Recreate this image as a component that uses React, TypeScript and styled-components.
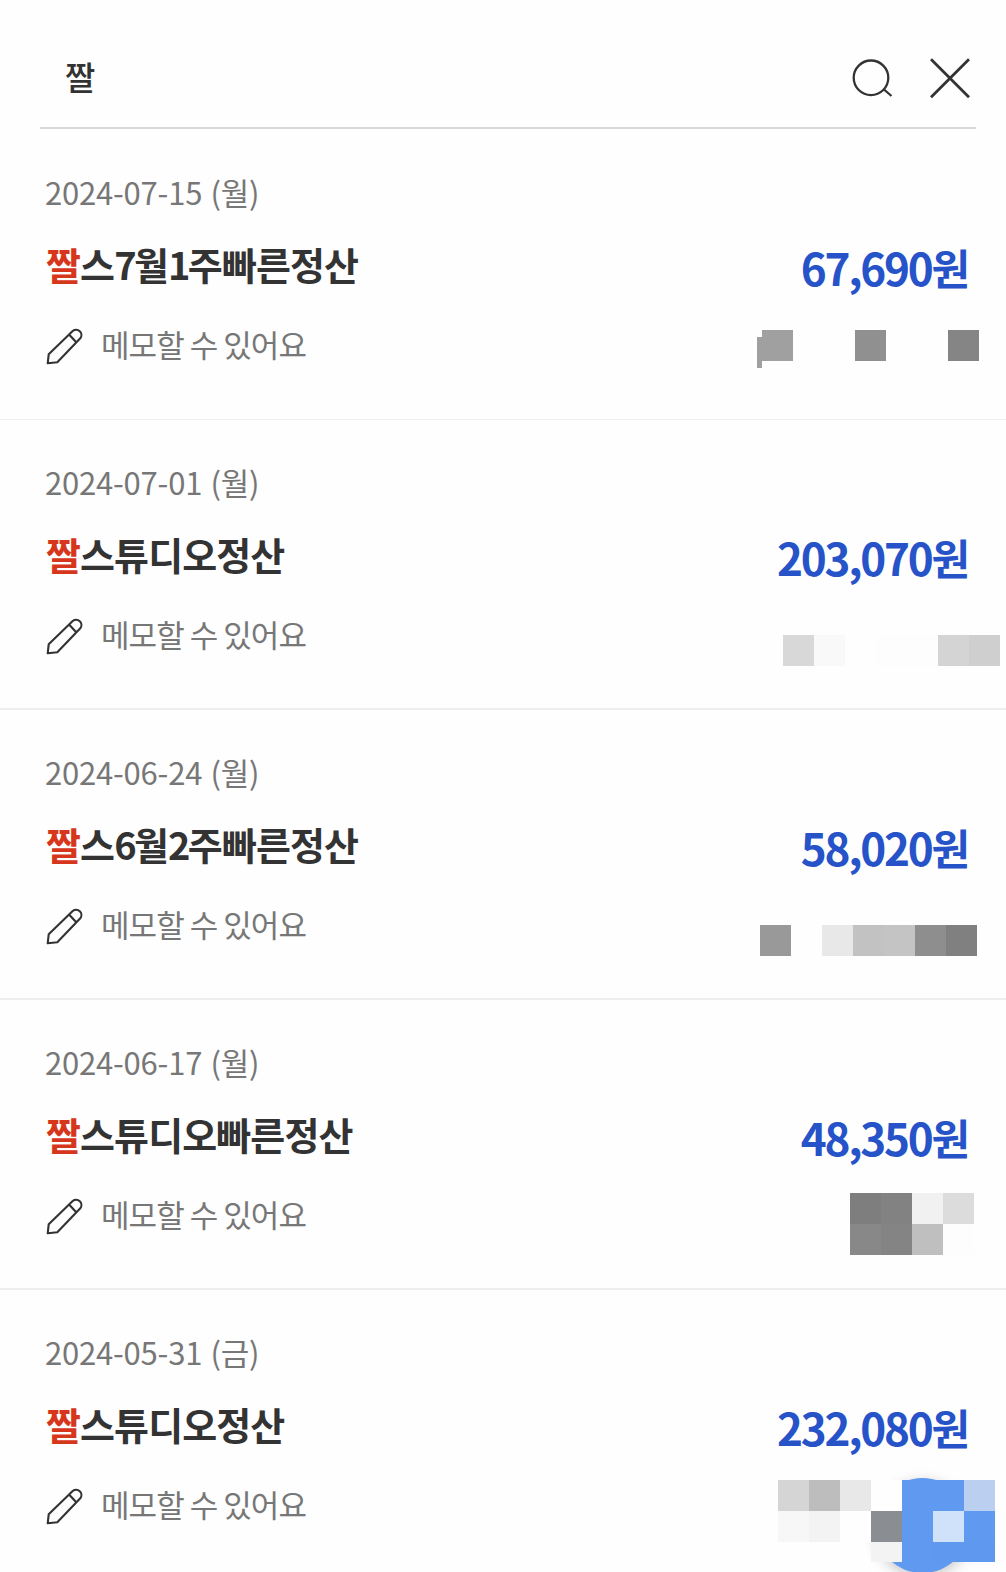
import React from "react";
import styled, { createGlobalStyle } from "styled-components";

const GlobalStyle = createGlobalStyle`
  * { box-sizing: border-box; }
  html, body { margin: 0; padding: 0; background: #fefefe; overflow: hidden; }
`;

const Page = styled.main`
  position: relative;
  width: 1006px;
  height: 1572px;
  overflow: hidden;
  background: #fefefe;
  color: #333;
  font-family: "Noto Sans CJK KR", "Noto Sans", sans-serif;
`;

const SearchBar = styled.header`
  display: flex;
  align-items: center;
  height: 99px;
  margin: 30px 30px 1px 40px;
  padding: 0 5px 1px 25px;
  border-bottom: 2px solid #d8d8d8;
`;

const Query = styled.div`
  flex: 1;
  padding-bottom: 5px;
  font-size: 33px;
  line-height: 48px;
  font-weight: 500;
`;

const IconButton = styled.button`
  display: flex;
  width: 42px;
  height: 42px;
  margin-left: 36px;
  padding: 0;
  border: 0;
  background: none;
`;

const List = styled.ul`
  margin: 0;
  padding: 0;
  list-style: none;
`;

const Row = styled.li<{ $line: number }>`
  display: flex;
  justify-content: space-between;
  height: 290px;
  padding-left: 45px;
  border-bottom: ${(p) => p.$line}px solid #eee;
`;

const Info = styled.div`
  display: flex;
  flex-direction: column;
  padding-top: 38px;
`;

const DateText = styled.div`
  height: 48px;
  font-size: 31px;
  line-height: 48px;
  letter-spacing: -0.2px;
  word-spacing: 1.5px;
  color: #777;
  white-space: nowrap;
`;

const Title = styled.div`
  height: 56px;
  margin: 20px 0 0 1px;
  font-size: 38px;
  line-height: 56px;
  font-weight: 700;
  letter-spacing: -0.9px;
  white-space: nowrap;
`;

const Match = styled.span`
  color: #d6371c;
`;

const Digit = styled.span`
  letter-spacing: -2.6px;
`;

const Memo = styled.div`
  display: flex;
  align-items: center;
  height: 46px;
  margin-top: 32px;
  color: #777;
  white-space: nowrap;
`;

const MemoText = styled.span`
  margin: -6px 0 0 16px;
  font-size: 31px;
  line-height: 46px;
  letter-spacing: -0.95px;
`;

const Side = styled.div`
  display: flex;
  flex-direction: column;
  align-items: flex-end;
  padding-top: 105px;
`;

const Amount = styled.div`
  height: 64px;
  margin: 0 38px 1px 0;
  font-size: 44px;
  line-height: 64px;
  font-weight: 700;
  letter-spacing: -2.2px;
  color: #2753c9;
  white-space: nowrap;
`;

const Currency = styled.span`
  font-size: 42px;
  line-height: 1;
  vertical-align: 1px;
`;

const Mosaic = styled.div<{ $cols: number; $top: number; $right: number; $rows?: string }>`
  position: relative;
  z-index: 2;
  display: grid;
  grid-template-columns: repeat(${(p) => p.$cols}, 31px);
  grid-template-rows: ${(p) => p.$rows ?? "none"};
  grid-auto-rows: 31px;
  margin: ${(p) => p.$top}px ${(p) => p.$right}px 0 0;
`;

const Cell = styled.i<{ $color: string }>`
  background: ${(p) => p.$color};
`;

const Sliver = styled.i`
  position: absolute;
  left: -5px;
  top: 7px;
  width: 5px;
  height: 31px;
  background: #a0a0a0;
`;

const FloatingButton = styled.button`
  position: absolute;
  z-index: 1;
  left: 875px;
  top: 1478px;
  width: 95px;
  height: 95px;
  padding: 0;
  border: 0;
  border-radius: 50%;
  background: #6099f0;
  box-shadow: 0 4px 14px rgba(0, 0, 0, 0.22);
`;

const SearchIcon = () => (
  <svg width="42" height="42" viewBox="0 0 42 42" fill="none" stroke="#333" strokeWidth="2.3">
    <circle cx="20" cy="20.8" r="17.3" />
    <path d="M33 32.5 L40.5 39" />
  </svg>
);

const CloseIcon = () => (
  <svg width="42" height="42" viewBox="0 0 42 42" fill="none" stroke="#333" strokeWidth="2.8">
    <path d="M2 2.3 L40 40.3 M40 2.3 L2 40.3" />
  </svg>
);

const PencilIcon = () => (
  <svg width="40" height="40" viewBox="0 0 40 40" fill="none" stroke="#333" strokeWidth="2.1" strokeLinejoin="round">
    <path d="M2.7 36.3 L3.7 27.3 L27.7 4 A5.3 5.3 0 0 1 35.3 11.3 L12.3 35.3 Z M24.3 7.7 L31.7 15.7" />
  </svg>
);

type Entry = {
  date: string;
  title: string;
  amount: string;
  cols: number;
  top: number;
  right: number;
  rows?: string;
  sliver?: boolean;
  cells: string[];
};

const N = "transparent";

const entries: Entry[] = [
  { date: "2024-07-15 (월)", title: "스7월1주빠른정산", amount: "67,690", cols: 7, top: 30, right: 27, sliver: true,
    cells: ["#a0a0a0", N, N, "#909090", N, N, "#858585"] },
  { date: "2024-07-01 (월)", title: "스튜디오정산", amount: "203,070", cols: 7, top: 45, right: 6,
    cells: ["#d8d8d8", "#f9f9f9", N, "#fdfdfd", "#fdfdfd", "#d4d4d4", "#cfcfcf"] },
  { date: "2024-06-24 (월)", title: "스6월2주빠른정산", amount: "58,020", cols: 7, top: 45, right: 29,
    cells: ["#999", N, "#e8e8e8", "#c2c2c2", "#c4c4c4", "#8e8e8e", "#808080"] },
  { date: "2024-06-17 (월)", title: "스튜디오빠른정산", amount: "48,350", cols: 4, top: 23, right: 32,
    cells: ["#7e7e7e", "#828282", "#f1f1f1", "#dcdcdc", "#888", "#848484", "#bfbfbf", "#fdfdfd"] },
  { date: "2024-05-31 (금)", title: "스튜디오정산", amount: "232,080", cols: 7, top: 20, right: 11, rows: "31px 31px 20px",
    cells: ["#d5d5d5", "#bdbdbd", "#e8e8e8", "#fefefe", "#6099f0", "#6099f0", "#bbcff1",
      "#f7f7f7", "#f3f3f3", "#fefefe", "#8a8e92", "#6099f0", "#cfe2fa", "#6099f0",
      N, N, N, "#f3f3f3", "#6099f0", "#5e98ef", "#5e98ef"] },
];

const renderTitle = (title: string) =>
  title.split(/(\d)/).map((part, i) => (/^\d$/.test(part) ? <Digit key={i}>{part}</Digit> : part));

export default function App() {
  return (
    <>
      <GlobalStyle />
      <Page>
        <SearchBar>
          <Query>짤</Query>
          <IconButton aria-label="검색"><SearchIcon /></IconButton>
          <IconButton aria-label="닫기"><CloseIcon /></IconButton>
        </SearchBar>
        <List>
          {entries.map((e, i) => (
            <Row key={e.date} $line={i === 0 ? 1 : 2}>
              <Info>
                <DateText>{e.date}</DateText>
                <Title><Match>짤</Match>{renderTitle(e.title)}</Title>
                <Memo><PencilIcon /><MemoText>메모할 수 있어요</MemoText></Memo>
              </Info>
              <Side>
                <Amount>{e.amount}<Currency>원</Currency></Amount>
                <Mosaic $cols={e.cols} $top={e.top} $right={e.right} $rows={e.rows}>
                  {e.sliver && <Sliver />}
                  {e.cells.map((c, j) => <Cell key={j} $color={c} />)}
                </Mosaic>
              </Side>
            </Row>
          ))}
        </List>
        <FloatingButton aria-label="메뉴" />
      </Page>
    </>
  );
}
